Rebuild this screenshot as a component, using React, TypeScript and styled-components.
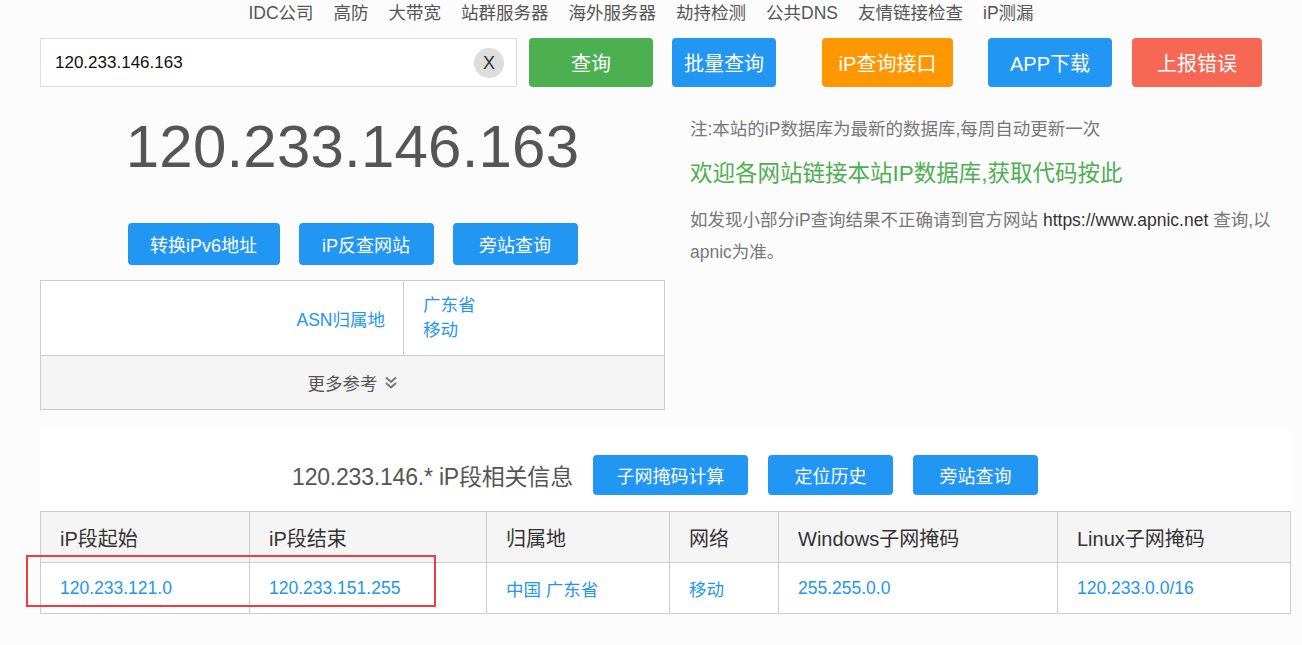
import React from 'react';
import styled, { createGlobalStyle } from 'styled-components';

const GlobalStyle = createGlobalStyle`
  * { box-sizing: border-box; }
  body {
    margin: 0;
    background: #fcfcfc;
    font-family: "Liberation Sans", Arial, "Noto Sans CJK SC", sans-serif;
    color: #555;
  }
`;

const Page = styled.div`
  width: 1302px;
  padding: 0 12px 0 40px;
`;

const Nav = styled.nav`
  display: flex;
  justify-content: center;
  gap: 20px;
  height: 26px;
  padding-top: 3px;
  padding-right: 48px;
  font-size: 17.5px;
  line-height: 20px;
  color: #555;
`;

const NavLink = styled.a`
  color: #555;
  text-decoration: none;
`;

const SearchBar = styled.div`
  display: flex;
  align-items: center;
  margin-top: 12px;
  height: 49px;
`;

const InputBox = styled.div`
  width: 477px;
  height: 49px;
  background: #fff;
  border: 1px solid #ddd;
  display: flex;
  align-items: center;
  padding: 1px 12px 0 12px;
`;

const Input = styled.input`
  flex: 1;
  border: none;
  outline: none;
  background: transparent;
  font-size: 17px;
  font-family: "Liberation Sans", Arial, sans-serif;
  color: #111;
`;

const ClearBtn = styled.span`
  width: 30px;
  height: 30px;
  border-radius: 50%;
  background: #ddd;
  color: #333;
  font-size: 18px;
  display: flex;
  align-items: center;
  justify-content: center;
`;

const Btn = styled.a<{ $bg: string; $w: number; $ml?: number; $h?: number; $fs?: number }>`
  display: inline-flex;
  align-items: center;
  justify-content: center;
  flex: none;
  width: ${p => p.$w}px;
  height: ${p => p.$h ?? 49}px;
  margin-left: ${p => p.$ml ?? 0}px;
  background: ${p => p.$bg};
  color: #fff;
  border-radius: 4px;
  font-size: ${p => p.$fs ?? 20}px;
  text-decoration: none;
`;

const Main = styled.div`
  display: flex;
`;

const LeftCol = styled.div`
  width: 625px;
  display: flex;
  flex-direction: column;
  align-items: center;
`;

const BigIp = styled.div`
  font-size: 60px;
  line-height: 60px;
  color: #555;
  margin-top: 30px;
  height: 106px;
  letter-spacing: 0.2px;
`;

const BtnRow = styled.div<{ $gap: number }>`
  display: flex;
  justify-content: center;
  gap: ${p => p.$gap}px;
`;

const InfoTable = styled.div`
  width: 625px;
  margin-top: 15px;
  border: 1px solid #ccc;
  background: #fff;
`;

const InfoRow = styled.div`
  display: flex;
  height: 75px;
  border-bottom: 1px solid #ccc;
`;

const InfoKey = styled.div`
  width: 363px;
  border-right: 1px solid #ccc;
  display: flex;
  align-items: center;
  justify-content: flex-end;
  padding-right: 18px;
  color: #2196f3;
  font-size: 17.5px;
`;

const InfoVal = styled.div`
  padding: 12px 0 0 19px;
  color: #2196f3;
  font-size: 17.5px;
  line-height: 25px;
`;

const MoreRow = styled.div`
  height: 53px;
  background: #f5f5f5;
  display: flex;
  align-items: center;
  justify-content: center;
  gap: 6px;
  font-size: 17.5px;
  color: #555;
`;

const RightCol = styled.div`
  flex: 1;
  padding: 30px 0 0 25px;
`;

const Note = styled.p`
  margin: 0;
  font-size: 17.5px;
  line-height: 24px;
  color: #777;
`;

const Welcome = styled.a`
  display: block;
  margin-top: 19px;
  font-size: 22.5px;
  line-height: 28px;
  color: #4caf50;
  text-decoration: none;
`;

const Hint = styled.p`
  margin: 16px 0 0;
  font-size: 17.5px;
  line-height: 32px;
  color: #777;
  width: 595px;
`;

const HintPart = styled.span<{ $dark?: boolean }>`
  color: ${p => (p.$dark ? '#333' : '#777')};
`;

const Panel = styled.section`
  position: relative;
  margin-top: 19px;
  width: 1250px;
  background: #fff;
  padding-top: 26px;
`;

const PanelHead = styled.div`
  display: flex;
  align-items: center;
  justify-content: center;
  gap: 20px;
  height: 40px;
`;

const PanelTitle = styled.h2`
  margin: 0;
  font-weight: normal;
  font-size: 23px;
  color: #555;
  letter-spacing: -0.2px;
`;

const RangeTable = styled.table`
  margin-top: 16px;
  width: 1250px;
  border-collapse: collapse;
  table-layout: fixed;
  font-size: 17.5px;
`;

const Th = styled.th<{ $w: number }>`
  width: ${p => p.$w}px;
  height: 51px;
  background: #f5f5f5;
  border: 1px solid #ccc;
  text-align: left;
  font-weight: normal;
  font-size: 20px;
  color: #333;
  padding: 0 0 0 19px;
`;

const Td = styled.td`
  height: 51px;
  border: 1px solid #ccc;
  color: #2196f3;
  padding: 0 0 0 19px;
`;

const Mark = styled.div`
  position: absolute;
  left: -14px;
  top: 126px;
  width: 410px;
  height: 52px;
  border: 2px solid #f23b3b;
  pointer-events: none;
`;

const navItems = ['IDC公司', '高防', '大带宽', '站群服务器', '海外服务器', '劫持检测', '公共DNS', '友情链接检查', 'iP测漏'];

const columns = [
  { title: 'iP段起始', w: 209, value: '120.233.121.0' },
  { title: 'iP段结束', w: 237, value: '120.233.151.255' },
  { title: '归属地', w: 183, value: '中国 广东省' },
  { title: '网络', w: 109, value: '移动' },
  { title: 'Windows子网掩码', w: 279, value: '255.255.0.0' },
  { title: 'Linux子网掩码', w: 233, value: '120.233.0.0/16' },
];

const Chevrons = () => (
  <svg width="14" height="15" viewBox="0 0 14 15" fill="none" stroke="#777" strokeWidth="2">
    <path d="M2 2.5 L7 7 L12 2.5" />
    <path d="M2 8 L7 12.5 L12 8" />
  </svg>
);

const App: React.FC = () => (
  <>
    <GlobalStyle />
    <Page>
      <Nav>
        {navItems.map(n => (
          <NavLink key={n}>{n}</NavLink>
        ))}
      </Nav>

      <SearchBar>
        <InputBox>
          <Input defaultValue="120.233.146.163" />
          <ClearBtn>X</ClearBtn>
        </InputBox>
        <Btn $bg="#4caf50" $w={124} $ml={12}>查询</Btn>
        <Btn $bg="#2196f3" $w={104} $ml={19}>批量查询</Btn>
        <Btn $bg="#ff9800" $w={131} $ml={46}>iP查询接口</Btn>
        <Btn $bg="#2196f3" $w={124} $ml={35}>APP下载</Btn>
        <Btn $bg="#f66754" $w={130} $ml={20}>上报错误</Btn>
      </SearchBar>

      <Main>
        <LeftCol>
          <BigIp>120.233.146.163</BigIp>
          <BtnRow $gap={19}>
            <Btn $bg="#2196f3" $w={152} $h={42} $fs={18}>转换iPv6地址</Btn>
            <Btn $bg="#2196f3" $w={135} $h={42} $fs={18}>iP反查网站</Btn>
            <Btn $bg="#2196f3" $w={125} $h={42} $fs={18}>旁站查询</Btn>
          </BtnRow>
          <InfoTable>
            <InfoRow>
              <InfoKey>ASN归属地</InfoKey>
              <InfoVal>
                广东省
                <br />
                移动
              </InfoVal>
            </InfoRow>
            <MoreRow>
              更多参考 <Chevrons />
            </MoreRow>
          </InfoTable>
        </LeftCol>

        <RightCol>
          <Note>注:本站的iP数据库为最新的数据库,每周自动更新一次</Note>
          <Welcome>欢迎各网站链接本站IP数据库,获取代码按此</Welcome>
          <Hint>
            <HintPart>如发现小部分iP查询结果不正确请到官方网站 </HintPart>
            <HintPart $dark>https://www.apnic.net</HintPart>
            <HintPart> 查询,以apnic为准。</HintPart>
          </Hint>
        </RightCol>
      </Main>

      <Panel>
        <PanelHead>
          <PanelTitle>120.233.146.* iP段相关信息</PanelTitle>
          <Btn $bg="#2196f3" $w={155} $h={40} $fs={18}>子网掩码计算</Btn>
          <Btn $bg="#2196f3" $w={125} $h={40} $fs={18}>定位历史</Btn>
          <Btn $bg="#2196f3" $w={125} $h={40} $fs={18}>旁站查询</Btn>
        </PanelHead>
        <RangeTable>
          <thead>
            <tr>
              {columns.map(c => (
                <Th key={c.title} $w={c.w}>{c.title}</Th>
              ))}
            </tr>
          </thead>
          <tbody>
            <tr>
              {columns.map(c => (
                <Td key={c.title}>{c.value}</Td>
              ))}
            </tr>
          </tbody>
        </RangeTable>
        <Mark />
      </Panel>
    </Page>
  </>
);

export default App;
